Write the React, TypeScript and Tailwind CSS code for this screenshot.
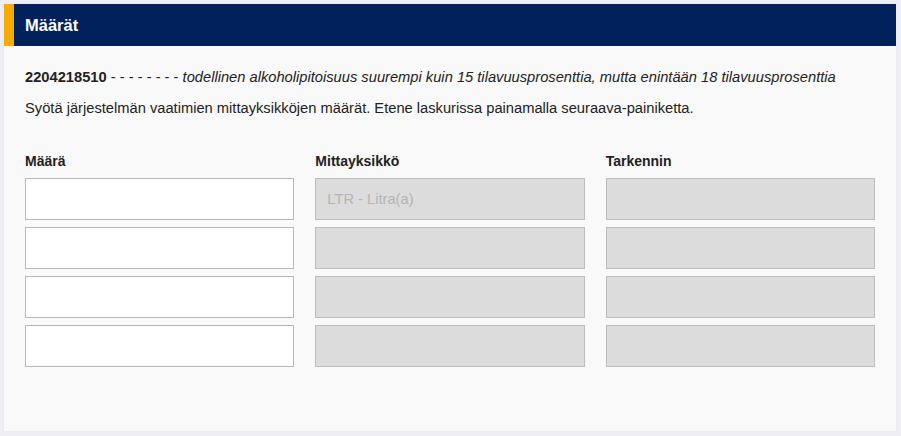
import React from "react";

export default function App() {
  const rows = [0, 1, 2, 3];
  return (
    <div className="w-[901px] h-[436px] bg-[#eeeef4] pt-[4px] px-[4px]" style={{ fontFamily: '"Liberation Sans", Arial, sans-serif' }}>
      <div className="w-[892px] h-[427px] bg-[#f9f9f9] shadow-[0_0_3px_rgba(0,0,0,0.04)]">
        <div className="h-[42px] bg-[#00215b] border-l-[10px] border-[#f5ab00] flex items-center pl-[11px]">
          <span className="text-white font-bold text-[16.5px]">Määrät</span>
        </div>
        <div className="px-[21px] text-[#222] text-[14.7px]">
          <p className="mt-[21px] leading-[20px] whitespace-nowrap">
            <span className="font-bold">2204218510</span> - - - - - - - - <span className="italic">todellinen alkoholipitoisuus suurempi kuin 15 tilavuusprosenttia, mutta enintään 18 tilavuusprosenttia</span>
          </p>
          <p className="mt-[11px] leading-[20px]">
            Syötä järjestelmän vaatimien mittayksikköjen määrät. Etene laskurissa painamalla seuraava-painiketta.
          </p>
          <div className="mt-[33px] grid grid-cols-3 gap-x-[21px] text-[14px]">
            <div className="font-bold leading-[20px]">Määrä</div>
            <div className="font-bold leading-[20px]">Mittayksikkö</div>
            <div className="font-bold leading-[20px]">Tarkennin</div>
          </div>
          <div className="mt-[7px] grid grid-cols-3 gap-x-[21px] gap-y-[7px]">
            {rows.map((r) => (
              <React.Fragment key={r}>
                <input className="h-[42px] w-full border border-[#b8b8b8] bg-white outline-none px-[11px]" />
                <div className="h-[42px] w-full border border-[#bdbdbd] bg-[#dcdcdc] flex items-center px-[11px] text-[#b4b4b4] text-[14.7px]">
                  {r === 0 ? "LTR - Litra(a)" : ""}
                </div>
                <div className="h-[42px] w-full border border-[#bdbdbd] bg-[#dcdcdc]" />
              </React.Fragment>
            ))}
          </div>
        </div>
      </div>
    </div>
  );
}
